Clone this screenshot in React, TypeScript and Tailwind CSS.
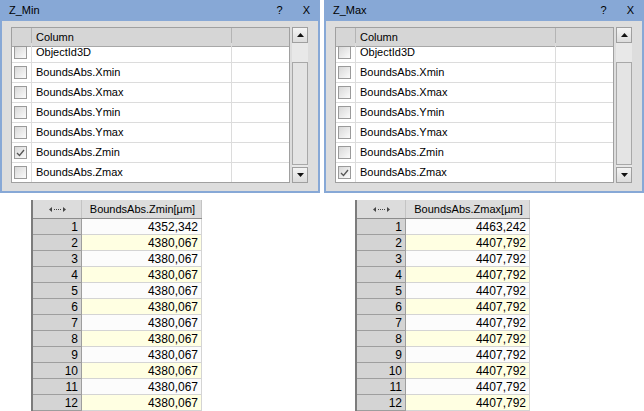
import React from 'react';

const font = { fontFamily: '"Liberation Sans", Arial, sans-serif' };

const columns = [
  'ObjectId3D',
  'BoundsAbs.Xmin',
  'BoundsAbs.Xmax',
  'BoundsAbs.Ymin',
  'BoundsAbs.Ymax',
  'BoundsAbs.Zmin',
  'BoundsAbs.Zmax',
];

function CheckBox({ checked }: { checked?: boolean }) {
  return (
    <div className="w-[13px] h-[13px] border border-[#9a9a9a] bg-gradient-to-br from-[#d8d8d8] to-[#fbfbfb] flex items-center justify-center">
      {checked ? (
        <svg width="9" height="8" viewBox="0 0 9 8">
          <path d="M1 4 L3.5 6.5 L8 1" fill="none" stroke="#555" strokeWidth="1.3" />
        </svg>
      ) : null}
    </div>
  );
}

function ScrollBar() {
  return (
    <div className="w-[16px] h-[156px] flex flex-col bg-[#e8e8e8]">
      <div className="h-[16px] border border-[#9f9f9f] bg-gradient-to-b from-[#f4f4f4] to-[#dcdcdc] flex items-center justify-center">
        <svg width="7" height="4" viewBox="0 0 7 4"><path d="M0 4 L3.5 0 L7 4 Z" fill="#111" /></svg>
      </div>
      <div className="h-[19px]" />
      <div className="flex-1 border border-[#a8a8a8] bg-[#e4e4e4] mb-[2px]" />
      <div className="h-[16px] border border-[#9f9f9f] bg-gradient-to-b from-[#f4f4f4] to-[#dcdcdc] flex items-center justify-center">
        <svg width="7" height="4" viewBox="0 0 7 4"><path d="M0 0 L3.5 4 L7 0 Z" fill="#111" /></svg>
      </div>
    </div>
  );
}

function ColumnPanel({ title, checkedCol }: { title: string; checkedCol: string }) {
  return (
    <div className="w-[320px] h-[193px] flex flex-col border-x-2 border-b-2 border-[#87a8d6] bg-[#dddddd]">
      <div className="h-[21px] bg-[#87a8d6] flex items-center pl-[7px] pr-[8px] text-[11px] text-black">
        <span className="flex-1">{title}</span>
        <span className="mr-[20px]">?</span>
        <span>X</span>
      </div>
      <div className="flex pt-[6px] pl-[9px] gap-[2px]">
        <div className="w-[279px] h-[156px] border border-[#a0a0a0] bg-white flex flex-col overflow-hidden">
          <div className="h-[19px] shrink-0 flex bg-[#d6d6d6] border-b border-[#a8a8a8]">
            <div className="w-[20px] border-r border-[#b4b4b4]" />
            <div className="w-[200px] border-r border-[#b4b4b4] pl-[4px] flex items-center text-[11px]">Column</div>
            <div className="flex-1" />
          </div>
          <div className="flex flex-col -mt-[4px]">
            {columns.map((c) => (
              <div key={c} className="h-[20px] shrink-0 flex border-b border-[#dcdcdc]">
                <div className="w-[20px] border-r border-[#dcdcdc] flex items-center pl-[2px]">
                  <CheckBox checked={c === checkedCol} />
                </div>
                <div className="w-[200px] border-r border-[#dcdcdc] pl-[4px] flex items-center text-[11px]">{c}</div>
                <div className="flex-1" />
              </div>
            ))}
          </div>
        </div>
        <ScrollBar />
      </div>
    </div>
  );
}

function ResizeIcon() {
  return (
    <svg width="17" height="5" viewBox="0 0 17 5">
      <path d="M0 2.5 L3 0 L3 5 Z" fill="#444" />
      <rect x="5" y="2" width="1" height="1" fill="#444" />
      <rect x="7" y="2" width="1" height="1" fill="#444" />
      <rect x="9" y="2" width="1" height="1" fill="#444" />
      <rect x="11" y="2" width="1" height="1" fill="#444" />
      <path d="M17 2.5 L14 0 L14 5 Z" fill="#444" />
    </svg>
  );
}

function ValueTable({ header, values, valueWidth }: { header: string; values: string[]; valueWidth: string }) {
  return (
    <div className="flex flex-col border-l-2 border-[#7c7c7c] text-[11px]">
      <div className="h-[19px] flex bg-[#dcdcdc] border-b border-[#8c8c8c]">
        <div className="w-[49px] flex items-center justify-center border-r border-[#c4c4c4]">
          <ResizeIcon />
        </div>
        <div className={`${valueWidth} flex items-center justify-center border-r border-[#c4c4c4] pl-[2px]`}>{header}</div>
      </div>
      {values.map((v, i) => (
        <div key={i} className="h-[16px] flex">
          <div className="w-[49px] bg-[#d4d4d4] border-b border-r border-[#9e9e9e] flex items-end justify-end pr-[3px] text-[12px] leading-[14px]">
            {i + 1}
          </div>
          <div
            className={`${valueWidth} border-b border-r border-[#d4d4d4] flex items-center justify-end pr-[3px] ${
              i % 2 === 0 ? 'bg-[#fcfcfc]' : 'bg-[#ffffe2]'
            } text-[12px]`}
          >
            {v}
          </div>
        </div>
      ))}
    </div>
  );
}

export default function App() {
  const minVals = ['4352,342', ...Array(11).fill('4380,067')];
  const maxVals = ['4463,242', ...Array(11).fill('4407,792')];
  return (
    <div className="w-[644px] h-[411px] bg-white overflow-hidden text-black" style={font}>
      <div className="flex gap-[4px]">
        <ColumnPanel title="Z_Min" checkedCol="BoundsAbs.Zmin" />
        <ColumnPanel title="Z_Max" checkedCol="BoundsAbs.Zmax" />
      </div>
      <div className="flex mt-[7px]">
        <div className="ml-[31px]">
          <ValueTable header="BoundsAbs.Zmin[µm]" values={minVals} valueWidth="w-[120px]" />
        </div>
        <div className="ml-[153px]">
          <ValueTable header="BoundsAbs.Zmax[µm]" values={maxVals} valueWidth="w-[124px]" />
        </div>
      </div>
    </div>
  );
}
